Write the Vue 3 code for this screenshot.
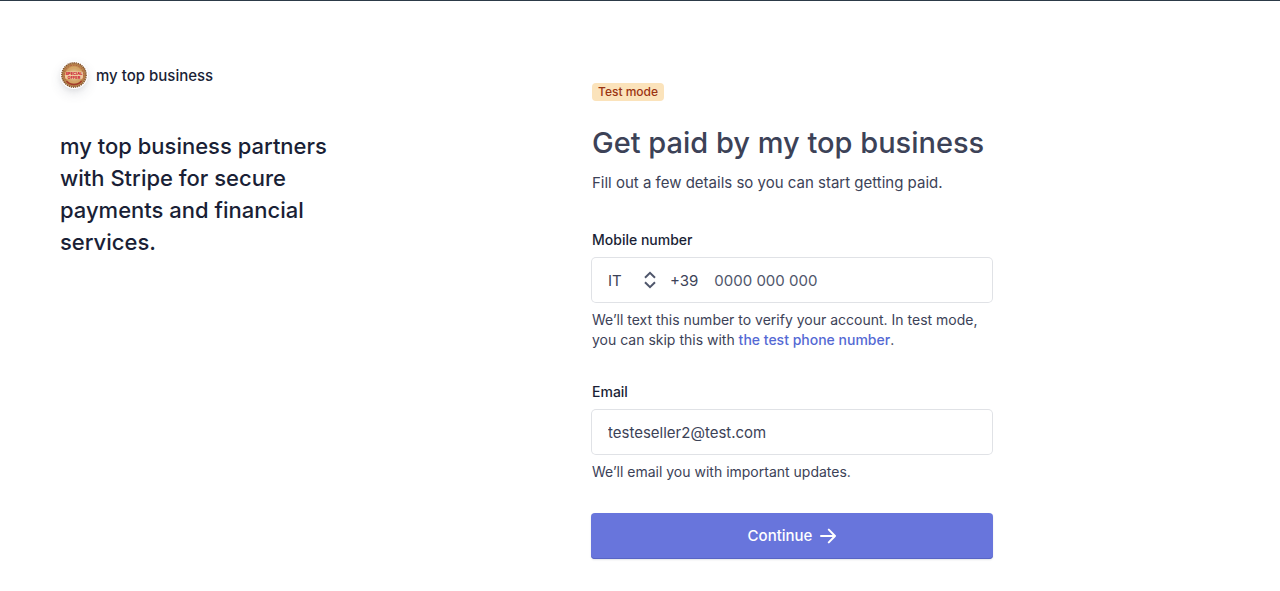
<script setup>
import { ref } from 'vue'

const country = ref('IT')
const phone = ref('')
const email = ref('testeseller2@test.com')
const codes = { IT: '+39', FR: '+33', US: '+1' }
</script>

<template>
  <div class="page">
    <aside class="intro">
      <div class="brand">
        <span class="logo">
          <svg viewBox="0 0 26 26" width="26" height="26" aria-hidden="true">
            <defs>
              <radialGradient id="gold" cx="0.5" cy="0.5" r="0.5">
                <stop offset="0" stop-color="#ecd0a0" />
                <stop offset="0.65" stop-color="#cf9f62" />
                <stop offset="1" stop-color="#a8743f" />
              </radialGradient>
            </defs>
            <circle cx="13" cy="13" r="12" fill="url(#gold)" />
            <circle cx="13" cy="13" r="12.2" fill="none" stroke="#85552f" stroke-width="1.4" stroke-dasharray="1.3 0.8" />
            <circle cx="13" cy="13" r="9.8" fill="none" stroke="#b5593d" stroke-width="1" stroke-dasharray="1.6 1.2" />
            <circle cx="13" cy="13" r="7.8" fill="none" stroke="#d9a866" stroke-width="0.8" />
            <path d="M5.4 19a10 10 0 0 0 15.2 0" fill="none" stroke="#a33b2a" stroke-width="1.4" />
            <rect x="4" y="9.6" width="18" height="7.4" rx="2" fill="#f0c9a0" />
            <text x="13" y="13.2" text-anchor="middle" class="seal">SPECIAL</text>
            <text x="13" y="16.6" text-anchor="middle" class="seal">OFFER</text>
          </svg>
        </span>
        <span class="brand-name">my top business</span>
      </div>
      <p class="pitch">my top business partners with Stripe for secure payments and financial services.</p>
    </aside>

    <main class="content">
      <form class="form" @submit.prevent>
        <span class="badge">Test mode</span>
        <h1>Get paid by my top business</h1>
        <p class="lead">Fill out a few details so you can start getting paid.</p>

        <div class="field">
          <label for="phone">Mobile number</label>
          <div class="box">
            <div class="country">
              <select v-model="country" aria-label="Country">
                <option v-for="(code, name) in codes" :key="name" :value="name">{{ name }}</option>
              </select>
              <svg class="chevrons" viewBox="0 0 12 18" width="12" height="18" aria-hidden="true">
                <path d="M1 6.8 6 1.9l5 4.9M1 11.2l5 4.9 5-4.9" />
              </svg>
            </div>
            <span class="code">{{ codes[country] }}</span>
            <input id="phone" v-model="phone" type="tel" placeholder="0000 000 000" />
          </div>
          <p class="hint">We’ll text this number to verify your account. In test mode, you can skip this with <a href="#">the test phone number</a>.</p>
        </div>

        <div class="field">
          <label for="email">Email</label>
          <div class="box">
            <input id="email" v-model="email" type="email" />
          </div>
          <p class="hint">We’ll email you with important updates.</p>
        </div>

        <button class="submit" type="submit">
          Continue
          <svg viewBox="0 0 16 16" width="16" height="16" aria-hidden="true">
            <path d="M1 8h14M8.8 1.6 15 8l-6.2 6.4" />
          </svg>
        </button>
      </form>
    </main>
  </div>
</template>

<style>
body {
  background: #fff;
}
</style>

<style scoped>
.page {
  display: grid;
  grid-template-columns: 2fr 3fr;
  border-top: 1px solid #2c3a47;
  font-family: Inter, "Liberation Sans", sans-serif;
  font-size: 15px;
  line-height: 24px;
  color: #414552;
}
.intro {
  padding: 60px;
  color: #1a1f36;
}
.brand {
  display: flex;
  align-items: center;
  gap: 8px;
  font-weight: 500;
}
.brand-name {
  padding-top: 2px;
}
.logo {
  display: flex;
  align-items: center;
  justify-content: center;
  width: 28px;
  height: 28px;
  border-radius: 50%;
  background: #fff;
  box-shadow: 0 5px 12px rgba(60, 66, 87, 0.12), 0 2px 5px rgba(0, 0, 0, 0.06);
}
.seal {
  font-size: 4px;
  font-weight: 800;
  fill: #c8202c;
}
.pitch {
  max-width: 280px;
  margin: 41px 0 0;
  font-size: 22px;
  line-height: 32px;
  font-weight: 500;
}
.content {
  padding: 80px 80px 32px;
  color: #3c4257;
}
.form {
  display: flex;
  flex-direction: column;
  max-width: 400px;
}
.badge {
  align-self: flex-start;
  margin-top: 2px;
  padding: 0 6px;
  border-radius: 4px;
  background: #fbe3bb;
  color: #9b3412;
  font-size: 12px;
  line-height: 18px;
  font-weight: 500;
}
h1 {
  margin: 22px 0 0;
  font-size: 29px;
  line-height: 40px;
  font-weight: 500;
}
.lead {
  margin: 8px 0 0;
}
.field {
  margin-top: 35px;
}
.field + .field {
  margin-top: 32px;
}
label {
  display: block;
  margin-bottom: 8px;
  font-size: 14px;
  line-height: 20px;
  font-weight: 500;
  color: #1a1f36;
}
.box {
  display: flex;
  align-items: center;
  height: 44px;
  padding: 0 16px;
  border-radius: 4px;
  background: #fff;
  box-shadow: 0 0 0 1px #e0e2e6;
}
.country {
  display: grid;
  align-items: center;
  width: 48px;
  margin-right: 14px;
}
.country > * {
  grid-area: 1 / 1;
}
.chevrons {
  justify-self: end;
  pointer-events: none;
}
.chevrons path {
  fill: none;
  stroke: #4f566b;
  stroke-width: 2;
}
select,
input {
  min-width: 0;
  margin: 0;
  padding: 2px 0 0;
  border: 0;
  outline: 0;
  background: transparent;
  font: inherit;
  color: #3c4257;
}
select {
  appearance: none;
}
input {
  flex: 1;
}
input::placeholder {
  color: #4f566b;
  opacity: 1;
}
.code {
  padding-top: 2px;
  margin-right: 16px;
}
.hint {
  margin: 8px 0 0;
  font-size: 14px;
  line-height: 20px;
}
a {
  color: #5469d4;
  font-weight: 500;
  text-decoration: none;
}
.submit {
  display: flex;
  align-items: center;
  justify-content: center;
  gap: 8px;
  height: 46px;
  margin: 31px -1px 0;
  padding: 0;
  border: 0;
  border-radius: 4px;
  background: #6875dc;
  box-shadow: inset 0 -1px 0 #5865c4, 0 1px 2px rgba(60, 66, 87, 0.14);
  color: #fff;
  font: inherit;
  font-weight: 500;
}
.submit path {
  fill: none;
  stroke: #fff;
  stroke-width: 2;
  stroke-linecap: round;
  stroke-linejoin: round;
}
</style>
